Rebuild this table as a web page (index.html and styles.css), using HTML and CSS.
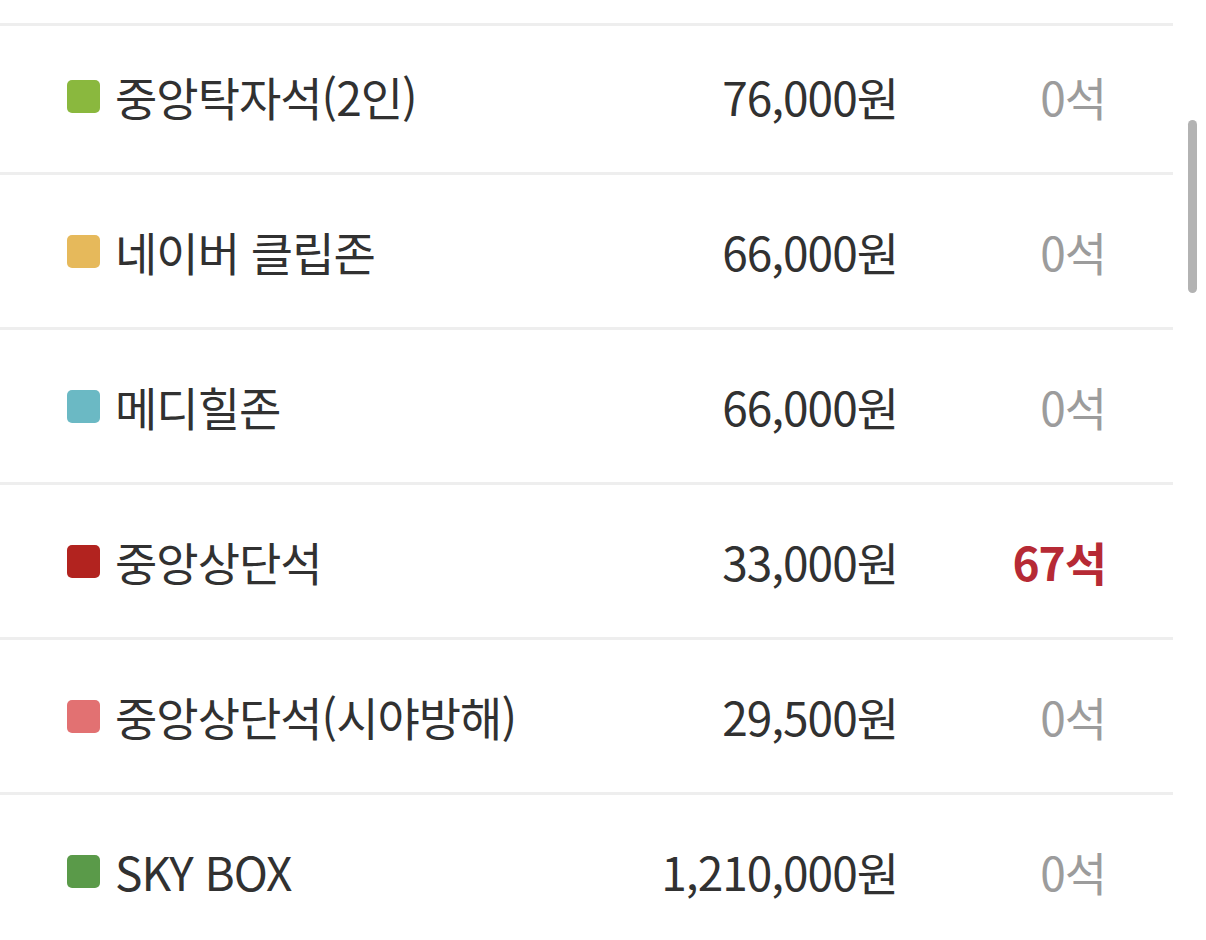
FILE: index.html
```html
<!DOCTYPE html>
<html lang="ko">
<head>
<meta charset="utf-8">
<link rel="stylesheet" href="styles.css">
</head>
<body>
<div class="page">
  <div class="list">
    <div class="stub"></div>
    <div class="row row--first">
      <div class="name"><span class="swatch c1"></span>중앙탁자석(2인)</div>
      <div class="price">76,000원</div>
      <div class="seats">0석</div>
    </div>
    <div class="row">
      <div class="name"><span class="swatch c2"></span>네이버 클립존</div>
      <div class="price">66,000원</div>
      <div class="seats">0석</div>
    </div>
    <div class="row">
      <div class="name"><span class="swatch c3"></span>메디힐존</div>
      <div class="price">66,000원</div>
      <div class="seats">0석</div>
    </div>
    <div class="row">
      <div class="name"><span class="swatch c4"></span>중앙상단석</div>
      <div class="price">33,000원</div>
      <div class="seats seats--open">67석</div>
    </div>
    <div class="row">
      <div class="name"><span class="swatch c5"></span>중앙상단석(시야방해)</div>
      <div class="price">29,500원</div>
      <div class="seats">0석</div>
    </div>
    <div class="row">
      <div class="name"><span class="swatch c6"></span>SKY BOX</div>
      <div class="price">1,210,000원</div>
      <div class="seats">0석</div>
    </div>
  </div>
  <div class="track"><div class="thumb"></div></div>
</div>
</body>
</html>
```
FILE: styles.css
```css
html, body {
  margin: 0;
  padding: 0;
  background: #ffffff;
}
body {
  font-family: "Noto Sans CJK KR", "Noto Sans", sans-serif;
  color: #313131;
  overflow: hidden;
}
.page {
  display: flex;
  width: 1206px;
  height: 940px;
  overflow: hidden;
}
.list {
  width: 1173px;
  flex: none;
}
.stub {
  height: 23px;
  border-bottom: 3px solid #eeeeee;
}
.row {
  display: grid;
  grid-template-columns: 1fr auto 208px;
  align-items: center;
  height: 152px;
  padding: 0 67px 0 67px;
  border-bottom: 3px solid #eeeeee;
  font-size: 46px;
  letter-spacing: -1px;
}
.row--first {
  box-sizing: border-box;
  height: 149px;
  padding-bottom: 6px;
}
.name {
  display: flex;
  align-items: center;
  white-space: nowrap;
}
.swatch {
  width: 33px;
  height: 33px;
  border-radius: 5px;
  margin-right: 15px;
  flex: none;
}
.c1 { background: #8ab83e; }
.c2 { background: #e6b95b; }
.c3 { background: #6bb9c4; }
.c4 { background: #b2231f; }
.c5 { background: #e27172; }
.c6 { background: #5a9a49; }
.price {
  text-align: right;
}
.seats {
  text-align: right;
  color: #9c9c9c;
}
.seats--open {
  color: #b62a35;
  font-weight: 700;
}
.track {
  flex: 1;
  padding-top: 120px;
  padding-left: 15px;
}
.thumb {
  width: 9px;
  height: 173px;
  border-radius: 5px;
  background: #b3b3b3;
}
```
